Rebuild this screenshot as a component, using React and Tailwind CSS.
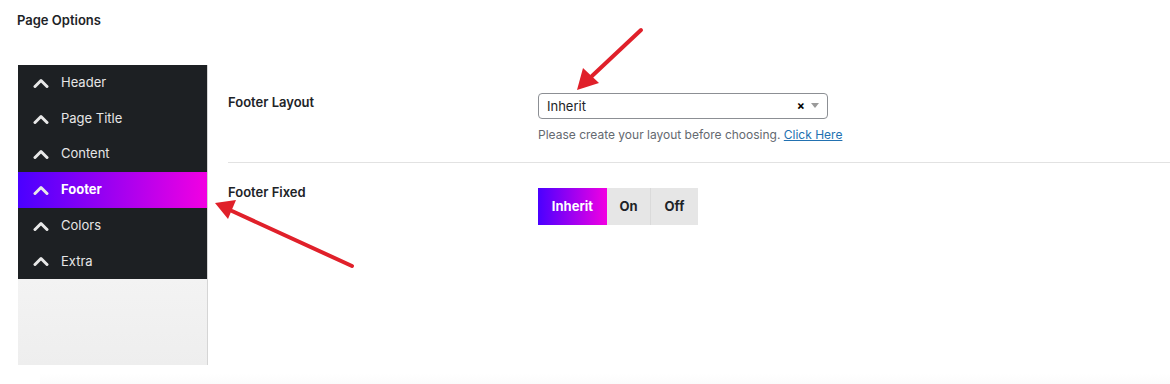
import React from 'react';

const font = { fontFamily: 'Inter, "Liberation Sans", Arial, sans-serif' };

const sections = ['Header', 'Page Title', 'Content', 'Footer', 'Colors', 'Extra'];

const Chevron = () => (
    <svg width="16" height="10" viewBox="0 0 16 10" className="shrink-0">
        <polyline points="2,8.5 8,2.5 14,8.5" fill="none" stroke="#e8e8e8" strokeWidth="3" strokeLinecap="round" strokeLinejoin="round" />
    </svg>
);

const SideItem = ({ label, active }) => (
    <div
        className={
            'flex items-center h-[35.7px] pl-[15px] gap-[12px] text-[13px] ' +
            (active
                ? 'bg-linear-to-r/srgb from-[#4a00ff] to-[#f200e2] text-white font-bold'
                : 'text-[#e6e6e6]')
        }
    >
        <Chevron />
        <span>{label}</span>
    </div>
);

export default function App() {
    return (
        <div className="relative w-[1170px] h-[384px] bg-white overflow-hidden" style={font}>
            <h1 className="pl-[17px] pt-[11px] text-[13px] font-semibold text-[#1d2327] leading-[18px]">Page Options</h1>

            <div className="flex mt-[36px] pl-[18px]">
                {/* Sidebar */}
                <div className="w-[190px] h-[300px] flex flex-col border-r border-[#d5d5d5]">
                    <div className="bg-[#1d2023]">
                        {sections.map((s) => (
                            <SideItem key={s} label={s} active={s === 'Footer'} />
                        ))}
                    </div>
                    <div className="flex-1 bg-gradient-to-b from-[#f3f3f3] to-[#eeeeee]" />
                </div>

                {/* Options */}
                <div className="flex-1 pl-[20px] pt-[28px]">
                    <div className="flex pb-[19px] border-b border-[#e2e2e2]">
                        <div className="w-[310px] text-[13px] font-semibold text-[#1d2327] leading-[18px]">Footer Layout</div>
                        <div>
                            <div className="w-[290px] h-[26px] border border-[#8c8f94] rounded-[4px] flex items-center pl-[8px] pr-[8px] text-[13px] text-[#1d2327]">
                                <span className="flex-1 pt-[2px]">Inherit</span>
                                <span className="text-[12px] font-bold text-black mr-[6px]">×</span>
                                <svg width="8" height="6" viewBox="0 0 8 6">
                                    <polygon points="0,0 8,0 4,5" fill="#9a9a9a" />
                                </svg>
                            </div>
                            <p className="mt-[8px] text-[12px] text-[#646970] leading-[16px]">
                                Please create your layout before choosing.{' '}
                                <span className="text-[#2271b1] underline">Click Here</span>
                            </p>
                        </div>
                    </div>

                    <div className="flex pt-[20px]">
                        <div className="w-[310px] text-[13px] font-semibold text-[#1d2327] leading-[18px]">Footer Fixed</div>
                        <div className="flex mt-[5px] h-[37px] text-[13px] font-bold">
                            <div className="w-[69px] flex items-center justify-center text-white bg-linear-to-r/srgb from-[#4a00ff] to-[#f200e2]">Inherit</div>
                            <div className="w-[44px] flex items-center justify-center bg-[#e6e6e6] text-[#1d2327] border-r border-[#dadada]">On</div>
                            <div className="w-[47px] flex items-center justify-center bg-[#e6e6e6] text-[#1d2327]">Off</div>
                        </div>
                    </div>
                </div>
            </div>

            <div className="absolute left-[40px] right-0 bottom-0 h-[10px] bg-gradient-to-b from-white to-[#fbfbfb]" />

            {/* annotation arrows */}
            <svg className="absolute inset-0 pointer-events-none" width="1170" height="384">
                <line x1="641" y1="30" x2="592" y2="76" stroke="#e0202a" strokeWidth="4" strokeLinecap="round" />
                <polygon points="577,90 583,68 599,83" fill="#e0202a" />
                <line x1="352" y1="266" x2="232" y2="211" stroke="#e0202a" strokeWidth="4" strokeLinecap="round" />
                <polygon points="215,203 236,200 228,219" fill="#e0202a" />
            </svg>
        </div>
    );
}
